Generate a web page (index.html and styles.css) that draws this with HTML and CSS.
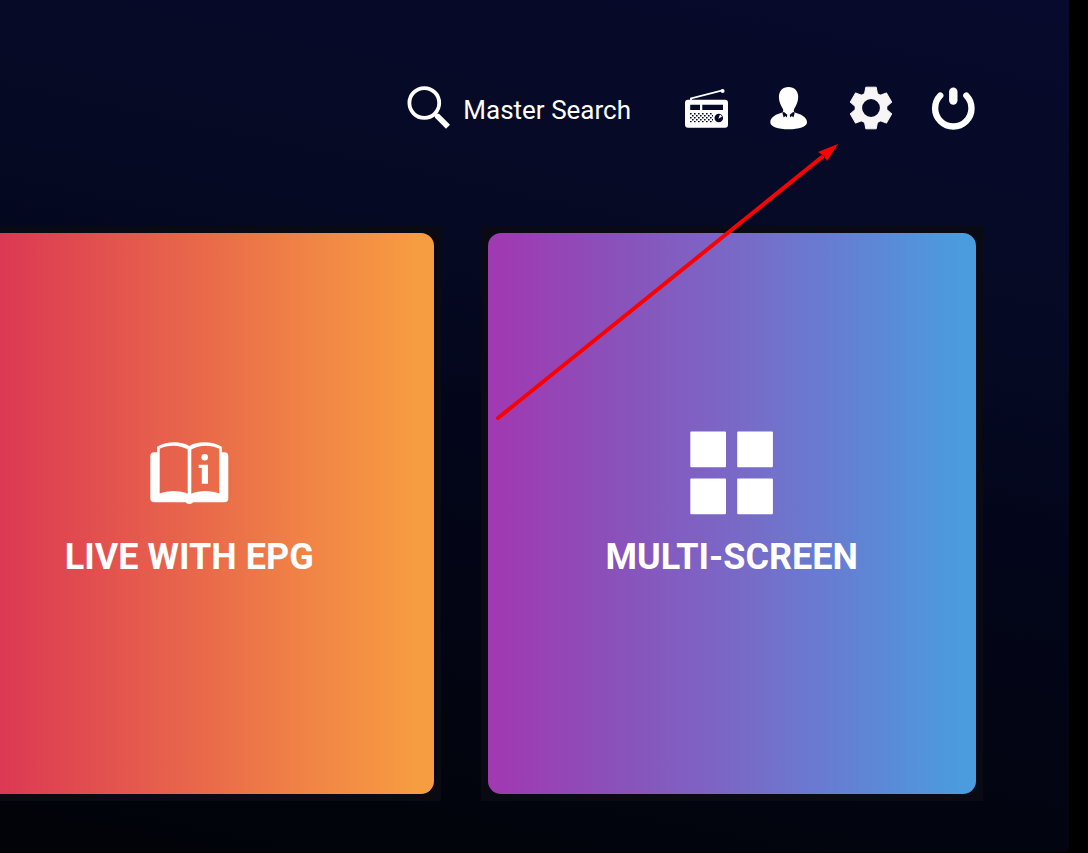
FILE: index.html
```html
<!DOCTYPE html>
<html lang="en">
<head>
    <meta charset="UTF-8">
    <meta name="viewport" content="width=device-width, initial-scale=1.0">
    <title>Home</title>
    <link rel="stylesheet" href="styles.css">
</head>
<body>

    <div class="screen">
        <header class="toolbar">
            <button type="button" class="search-btn">
                <svg class="icon" viewBox="0 0 44 44" fill="none" stroke="currentColor">
                    <circle cx="17.3" cy="17" r="14.9" stroke-width="3.8"/>
                    <path d="M27.5 27.5L31 31" stroke-width="4"/>
                    <path d="M29.8 29.6L41 40.8" stroke-width="5.6"/>
                </svg>
                <span class="search-label">Master Search</span>
            </button>

            <button type="button" class="icon-btn" aria-label="Radio">
                <svg class="icon" viewBox="0 0 44 44">
                    <defs>
                        <pattern id="grille" width="4" height="4" patternUnits="userSpaceOnUse" x="5" y="27">
                            <path class="hole" d="M0 0h1.6v1.6H0zM2 2h1.6v1.6H2z"/>
                        </pattern>
                    </defs>
                    <path d="M6 14L6 12.4L37.5 4.4" fill="none" stroke="currentColor" stroke-width="1.8"/>
                    <circle cx="37.6" cy="5" r="2" fill="currentColor"/>
                    <rect x="0" y="13.7" width="43" height="28" rx="3" fill="currentColor"/>
                    <path class="hole" d="M5.2 18.8H15V24H5.2zM17.3 18.8H38V24H17.3z"/>
                    <rect x="5" y="27" width="23" height="9.4" fill="url(#grille)"/>
                    <circle class="hole" cx="33.8" cy="32" r="4.3"/>
                    <path d="M33.3 32.8L35 28.5L37.2 30.4z" fill="currentColor"/>
                </svg>
            </button>

            <button type="button" class="icon-btn" aria-label="Profile">
                <svg class="icon" viewBox="0 0 44 44">
                    <path fill="currentColor" d="M21.5 1C27.5 1 31.2 5 31.2 11C31.2 16 29 19.5 27.4 22.5C26.6 24 26.4 25.6 27.8 26.4C33.5 28 40 30.5 40 36.3C40 41 32 43.3 21.6 43.3S3.3 41 3.3 36.3C3.3 30.5 9.6 28 15.3 26.4C16.6 25.6 16.5 24 15.7 22.5C14 19.5 11.9 16 11.9 11C11.9 5 15.6 1 21.5 1z"/>
                    <path class="hole" d="M15.3 26.6L17 26L20.3 28.8L19.8 31.4L18.3 30L16.7 31.4zM27.8 26.6L26.1 26L22.8 28.8L23.3 31.4L24.8 30L26.4 31.4z"/>
                </svg>
            </button>

            <button type="button" class="icon-btn" aria-label="Settings">
                <svg class="icon gear" viewBox="-22 -22 44 44">
                    <defs>
                        <path id="tooth" d="M-5.2 -20.8H5.2L6.4 -14.5L5 -12H-5L-6.4 -14.5z" stroke="currentColor" stroke-linejoin="round"/>
                    </defs>
                    <g fill="currentColor">
                        <use href="#tooth"/>
                        <use href="#tooth" transform="rotate(60)"/>
                        <use href="#tooth" transform="rotate(120)"/>
                        <use href="#tooth" transform="rotate(180)"/>
                        <use href="#tooth" transform="rotate(240)"/>
                        <use href="#tooth" transform="rotate(300)"/>
                    </g>
                    <circle r="12.6" fill="none" stroke="currentColor" stroke-width="7.4"/>
                </svg>
            </button>

            <button type="button" class="icon-btn" aria-label="Power">
                <svg class="icon" viewBox="0 0 44 44" fill="none" stroke="currentColor" stroke-linecap="round">
                    <path d="M9.2 9.6A18.2 18.2 0 1 0 35.4 9.6" stroke-width="6.4"/>
                    <path d="M22.3 5.8V14.6" stroke-width="8.4"/>
                </svg>
            </button>
        </header>

        <main class="tiles">
            <a href="#epg" class="tile-frame">
                <span class="tile tile-epg">
                    <svg class="tile-icon" viewBox="0 0 84 84" fill="currentColor">
                        <path fill-rule="evenodd" d="M10 21.3V15.7C20 10 34 10 42.3 15C50.5 10 65 10 74.8 15.7V21.3H77.3Q81.3 21.3 81.3 25.3V67.3Q81.3 71.3 77.3 71.3H46C45 73.6 39.7 73.6 38.7 71.3H7.3Q3.3 71.3 3.3 67.3V25.3Q3.3 21.3 7.3 21.3zM12.7 17.8V62.6C21 59 33 59 40.7 62.8V18.6C33 13.6 21 13.6 12.7 17.8zM44.3 18.6V62.8C52 59 64 59 72.3 62.6V17.8C64 13.6 52 13.6 44.3 18.6z"/>
                        <circle cx="57.7" cy="26.3" r="3.3"/>
                        <path d="M51.7 33.8H61V52.8H54.8V37H51.7z"/>
                    </svg>
                    <span class="tile-label">LIVE WITH EPG</span>
                </span>
            </a>

            <a href="#multi-screen" class="tile-frame">
                <span class="tile tile-multi">
                    <svg class="tile-icon" viewBox="0 0 84 84" fill="currentColor">
                        <rect x="0.3" y="0.6" width="35.7" height="35.7" rx="1"/>
                        <rect x="47.2" y="0.6" width="35.7" height="35.7" rx="1"/>
                        <rect x="0.3" y="47.6" width="35.7" height="35.7" rx="1"/>
                        <rect x="47.2" y="47.6" width="35.7" height="35.7" rx="1"/>
                    </svg>
                    <span class="tile-label">MULTI-SCREEN</span>
                </span>
            </a>
        </main>

        <!-- arrow pointing at the settings button -->
        <svg class="pointer" viewBox="0 0 344 278">
            <path d="M4 274L328 13" fill="none" stroke="currentColor" stroke-width="4" stroke-linecap="round"/>
            <path d="M344 0L333 17L330 12L324 8z" fill="currentColor" stroke="none"/>
        </svg>
    </div>

</body>
</html>
```
FILE: styles.css
```css
* {
    box-sizing: border-box;
}
body {
    margin: 0;
    padding: 0 19px 1px 0;
    background: #000;
    color: white;
    font-family: Roboto, sans-serif;
}
.screen {
    position: relative;
    display: flex;
    flex-direction: column;
    min-height: calc(100vh - 1px);
    padding-bottom: 51px;
    overflow: hidden;
    background: linear-gradient(192deg, #070a2c 0%, #060a26 25%, #03061a 52%, #02040f 80%, #010308 100%);
}
.toolbar {
    display: flex;
    justify-content: flex-end;
    align-items: center;
    gap: 38px;
    padding: 86px 94px 96px 0;
}
button {
    padding: 0;
    border: none;
    background: none;
    color: white;
    font-family: inherit;
    cursor: pointer;
}
.icon {
    display: block;
    width: 44px;
    height: 44px;
}
.search-btn {
    display: flex;
    align-items: center;
    gap: 12px;
    margin-right: 16px;
    font-size: 26px;
}
.search-label {
    padding-top: 4px;
}
.gear {
    color: #f7f5f6;
}
.hole {
    fill: #060a26;
}
.tiles {
    flex: 1;
    display: grid;
    grid-template-columns: 1fr 1fr;
    gap: 40px;
    /* first tile is scrolled partly off the left edge */
    margin: 0 86px 0 -62px;
}
.tile-frame {
    display: flex;
    padding: 7px;
    background: #090a13;
    color: white;
    text-decoration: none;
}
.tile {
    flex: 1;
    display: flex;
    flex-direction: column;
    align-items: center;
    justify-content: center;
    gap: 21px;
    padding-bottom: 19px;
    border-radius: 13px;
}
.tile-epg {
    background: linear-gradient(90deg, #dc3853 11%, #e8664b 50%, #f08146 72%, #f79d41 97%);
}
.tile-multi {
    background: linear-gradient(90deg, #9f3ab2 3%, #8b50ba 25%, #7a68c6 50%, #6282d4 75%, #4b9cdf 97%);
}
.tile-icon {
    width: 84px;
    height: 84px;
}
.tile-label {
    font-size: 36px;
    font-weight: bold;
    line-height: 42px;
}
.pointer {
    position: absolute;
    left: 494px;
    top: 144px;
    width: 344px;
    height: 278px;
    color: #ff0000;
    pointer-events: none;
}
```
